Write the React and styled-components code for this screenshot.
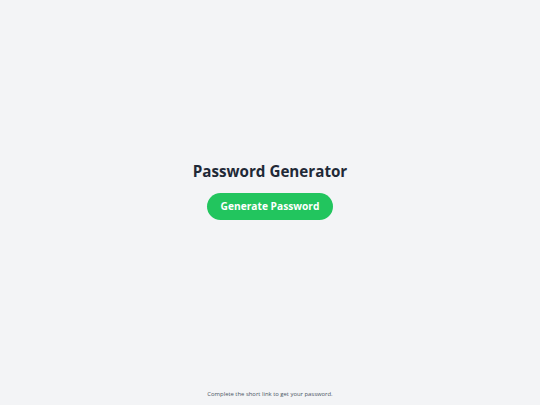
import React from "react";
import styled, { createGlobalStyle } from "styled-components";

const Global = createGlobalStyle`
  html, body { margin: 0; padding: 0; }
  body { background: #f3f4f6; font-family: "Open Sans", "Noto Sans", sans-serif; }
`;

const Page = styled.div`
  min-height: 405px;
  display: flex;
  flex-direction: column;
  background: #f3f4f6;
`;

const Main = styled.main`
  flex: 1;
  display: flex;
  flex-direction: column;
  align-items: center;
  justify-content: center;
  padding-bottom: 9px;
`;

const Title = styled.h1`
  margin: 0 0 12px;
  font-size: 15.2px;
  font-weight: 700;
  color: #1f2937;
  line-height: 20px;
`;

const Button = styled.button`
  border: none;
  background: #22c55e;
  color: #fff;
  font-family: inherit;
  font-weight: 700;
  font-size: 10.2px;
  height: 27px;
  padding: 0 13.5px;
  border-radius: 999px;
  cursor: pointer;
`;

const Footer = styled.footer`
  text-align: center;
  font-size: 5.9px;
  color: #4b5563;
  padding-bottom: 7.3px;
  line-height: 8px;
`;

export default function App() {
  return (
    <>
      <Global />
      <Page>
        <Main>
          <Title>Password Generator</Title>
          <Button>Generate Password</Button>
        </Main>
        <Footer>Complete the short link to get your password.</Footer>
      </Page>
    </>
  );
}
